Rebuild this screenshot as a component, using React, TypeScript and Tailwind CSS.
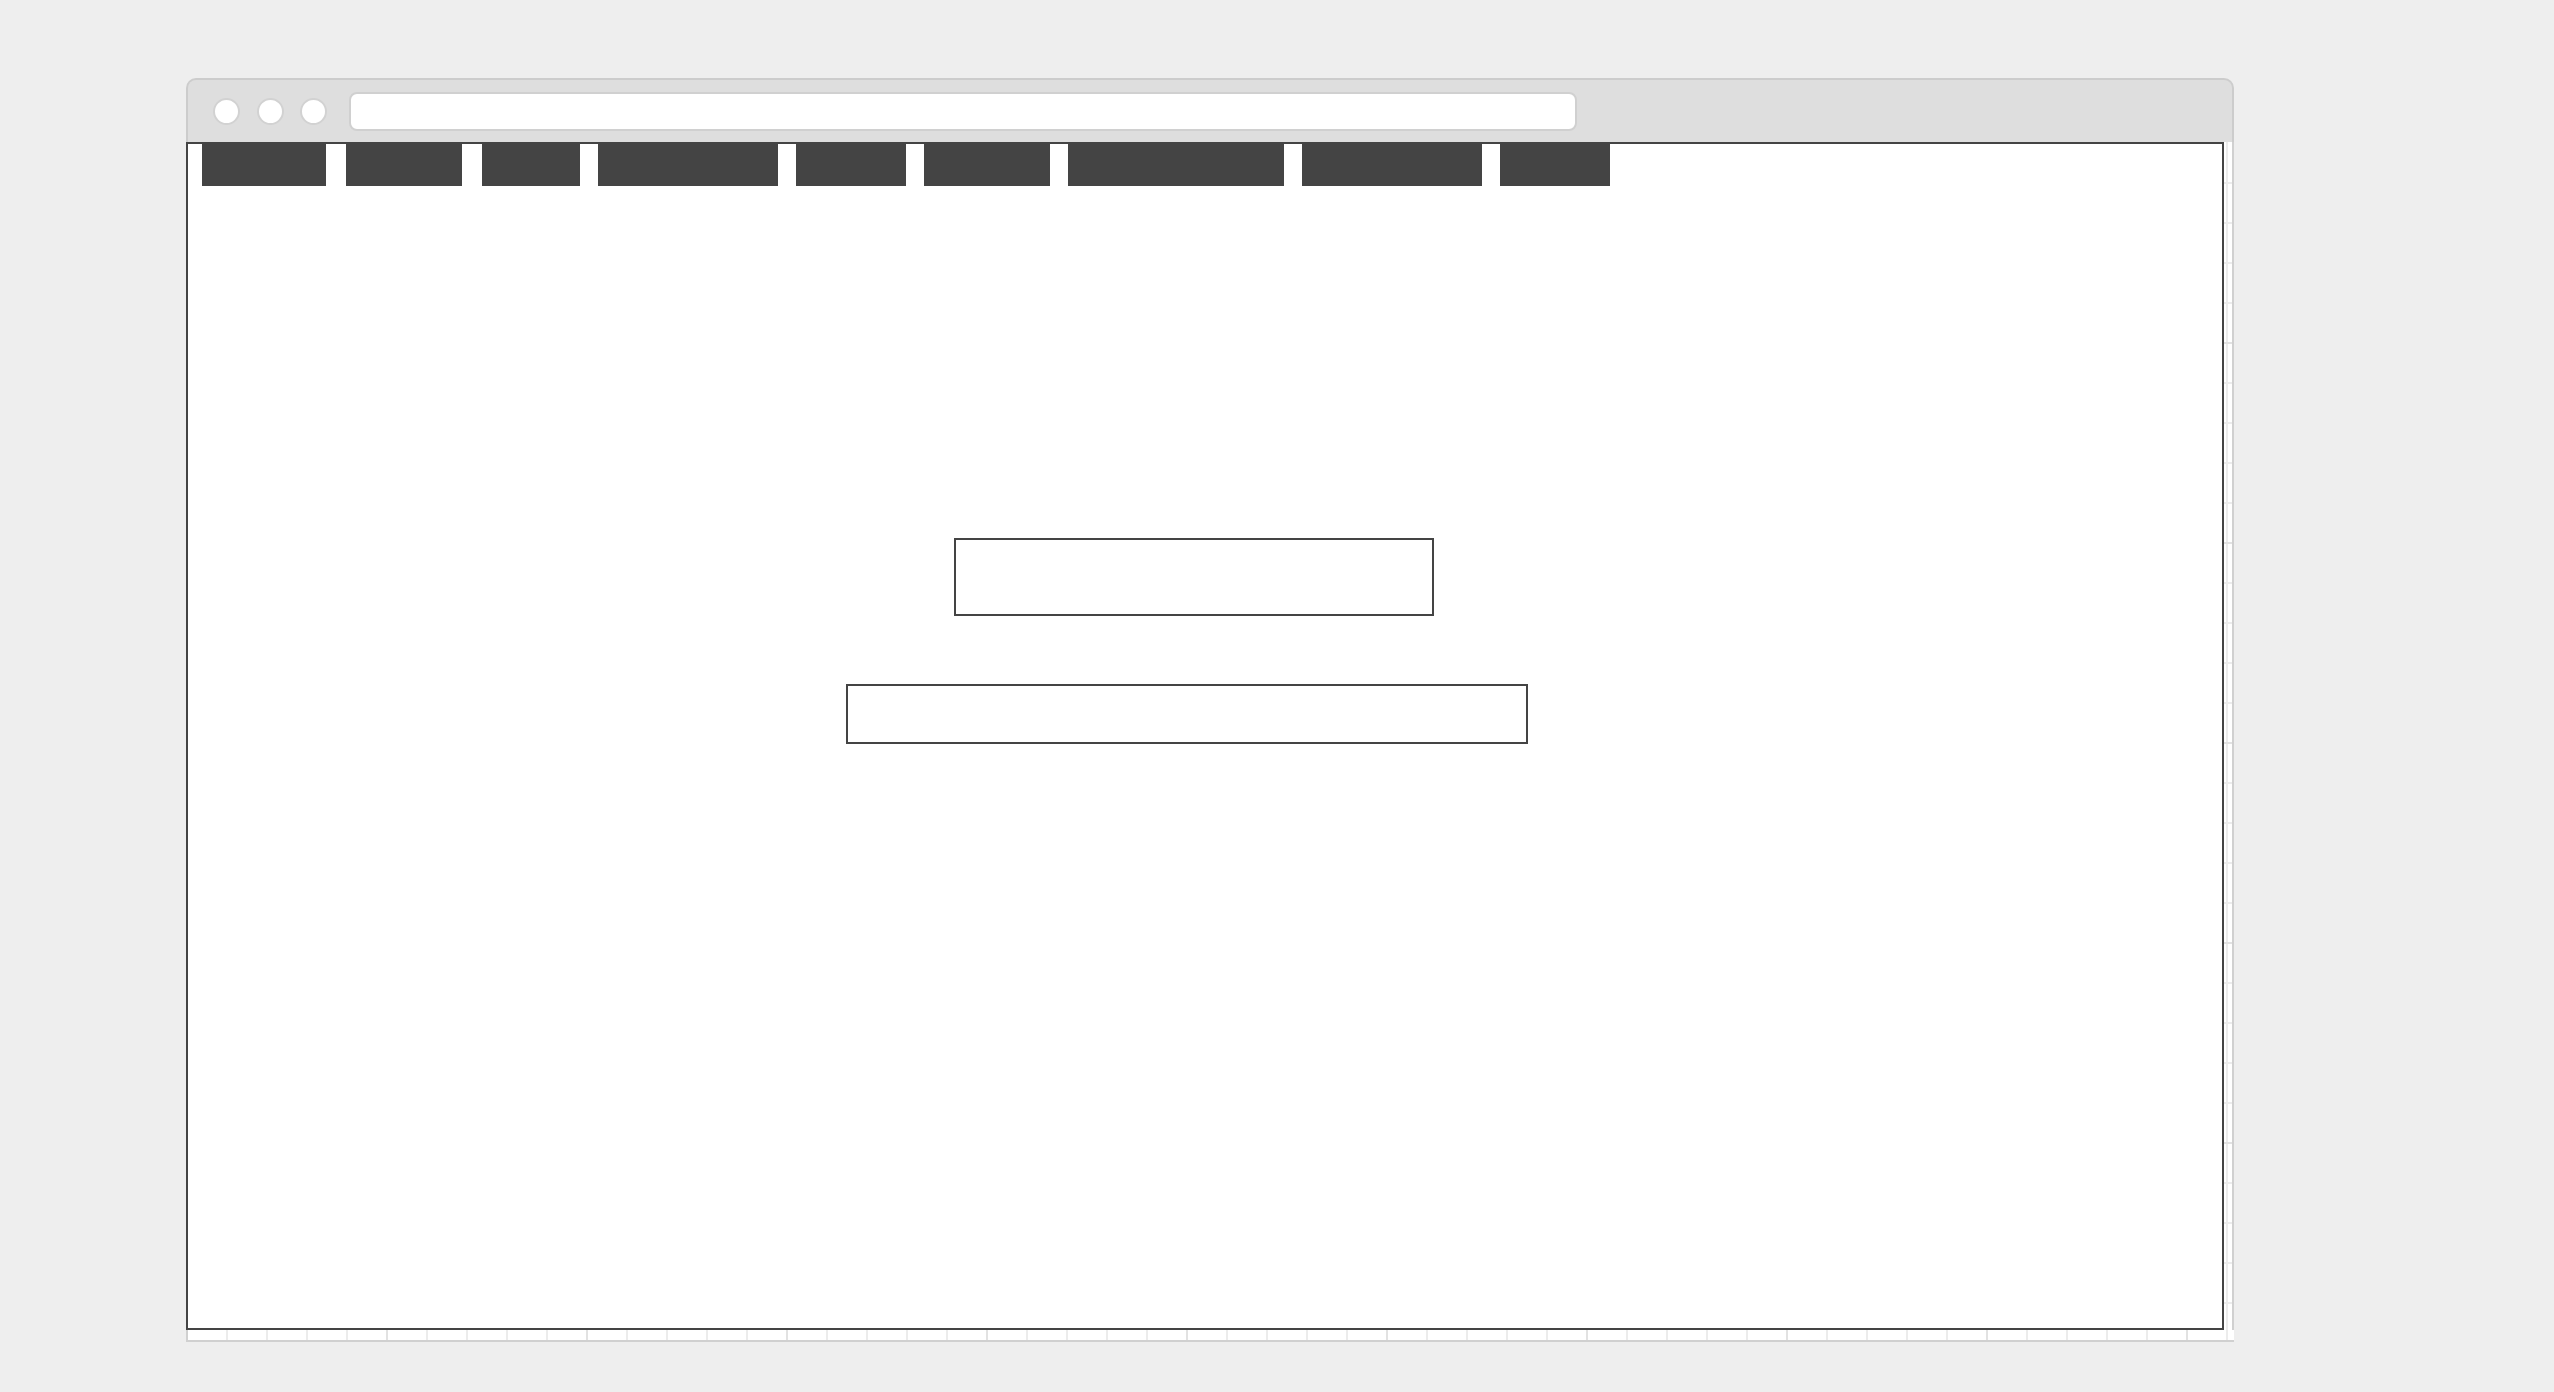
import React from "react";

const navItems = [
  { w: "w-[124px]", extra: "mr-[2px]" },
  { w: "w-[116px]", extra: "mr-[2px]" },
  { w: "w-[98px]", extra: "" },
  { w: "w-[180px]", extra: "" },
  { w: "w-[110px]", extra: "" },
  { w: "w-[126px]", extra: "" },
  { w: "w-[216px]", extra: "" },
  { w: "w-[180px]", extra: "" },
  { w: "w-[110px]", extra: "" },
];

function RightRuler() {
  const ticks = [];
  for (let y = 40; y < 1188; y += 40) {
    const major = y % 200 === 0;
    ticks.push(
      <rect key={y} x={0} y={y} width={major ? 10 : 8} height={2} fill={major ? "#e2e2e2" : "#ececec"} />
    );
  }
  return (
    <svg width="10" height="1188" className="block shrink-0 bg-white">
      <rect x={2} y={0} width={2} height={1188} fill="#ececec" />
      {ticks}
      <rect x={8} y={0} width={2} height={1188} fill="#d0d0d0" />
    </svg>
  );
}

function BottomRuler() {
  const ticks = [];
  for (let x = 40; x < 2048; x += 40) {
    const major = x % 200 === 0;
    ticks.push(
      <rect key={x} x={x} y={0} width={2} height={major ? 12 : 10} fill={major ? "#e2e2e2" : "#ececec"} />
    );
  }
  return (
    <svg width="2048" height="12" className="block bg-white">
      {ticks}
      <rect x={0} y={0} width={2} height={12} fill="#d0d0d0" />
      <rect x={2} y={10} width={2046} height={2} fill="#d0d0d0" />
    </svg>
  );
}

export default function App() {
  return (
    <div className="w-[2554px] h-[1392px] bg-[#eeeeee] pt-[78px] pl-[186px] overflow-hidden">
      <div className="w-[2048px] flex flex-col">
        {/* browser header */}
        <div className="h-[64px] rounded-t-[10px] border-2 border-b-0 border-[#cccccc] bg-[#dedede] flex items-center pl-[25px]">
          <div className="flex items-center gap-[16.5px]">
            <div className="w-[27px] h-[27px] rounded-full bg-white border-2 border-[#d2d2d2]" />
            <div className="w-[27px] h-[27px] rounded-full bg-white border-2 border-[#d2d2d2]" />
            <div className="w-[27px] h-[27px] rounded-full bg-white border-2 border-[#d2d2d2]" />
          </div>
          <div className="ml-[22px] w-[1228px] h-[39px] rounded-[8px] bg-white border-2 border-[#d0d0d0]" />
        </div>
        {/* body */}
        <div className="flex">
          <div className="w-[2038px] h-[1188px] border-2 border-[#444444] bg-white flex flex-col">
            <div className="flex pl-[14px] gap-[18px] h-[42px]">
              {navItems.map((n, i) => (
                <div key={i} className={`${n.w} ${n.extra} h-[42px] bg-[#444444]`} />
              ))}
            </div>
            <div className="mt-[352px] ml-[766px] w-[480px] h-[78px] border-2 border-[#444444] bg-white" />
            <div className="mt-[68px] ml-[658px] w-[682px] h-[60px] border-2 border-[#444444] bg-white" />
          </div>
          <RightRuler />
        </div>
        <BottomRuler />
      </div>
    </div>
  );
}
